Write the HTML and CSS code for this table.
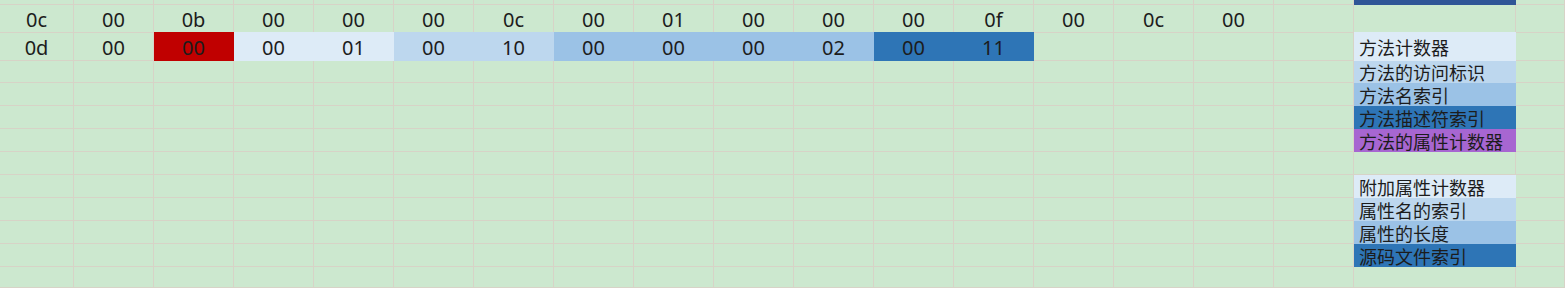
FILE: index.html
```html
<!DOCTYPE html>
<html lang="zh">
<head>
<meta charset="utf-8">
<title>Class file bytes</title>
<link rel="stylesheet" href="styles.css">
</head>
<body>
<div class="sheet">
  <div class="row h0">
    <div class="c"></div><div class="c"></div><div class="c"></div><div class="c"></div><div class="c"></div><div class="c"></div><div class="c"></div><div class="c"></div><div class="c"></div><div class="c"></div><div class="c"></div><div class="c"></div><div class="c"></div><div class="c"></div><div class="c"></div><div class="c"></div><div class="c"></div>
    <div class="c lab f bar"></div><div class="c"></div>
  </div>
  <div class="row h1">
    <div class="c">0c</div><div class="c">00</div><div class="c">0b</div><div class="c">00</div><div class="c">00</div><div class="c">00</div><div class="c">0c</div><div class="c">00</div><div class="c">01</div><div class="c">00</div><div class="c">00</div><div class="c">00</div><div class="c">0f</div><div class="c">00</div><div class="c">0c</div><div class="c">00</div><div class="c"></div>
    <div class="c lab"></div><div class="c"></div>
  </div>
  <div class="row h2">
    <div class="c">0d</div><div class="c">00</div><div class="c f red">00</div><div class="c f b1">00</div><div class="c f b1">01</div><div class="c f b2">00</div><div class="c f b2">10</div><div class="c f b3">00</div><div class="c f b3">00</div><div class="c f b3">00</div><div class="c f b3">02</div><div class="c f b4">00</div><div class="c f b4">11</div><div class="c"></div><div class="c"></div><div class="c"></div><div class="c"></div>
    <div class="c lab f b1">方法计数器</div><div class="c"></div>
  </div>
  <div class="row h3">
    <div class="c"></div><div class="c"></div><div class="c"></div><div class="c"></div><div class="c"></div><div class="c"></div><div class="c"></div><div class="c"></div><div class="c"></div><div class="c"></div><div class="c"></div><div class="c"></div><div class="c"></div><div class="c"></div><div class="c"></div><div class="c"></div><div class="c"></div>
    <div class="c lab f b2">方法的访问标识</div><div class="c"></div>
  </div>
  <div class="row h4">
    <div class="c"></div><div class="c"></div><div class="c"></div><div class="c"></div><div class="c"></div><div class="c"></div><div class="c"></div><div class="c"></div><div class="c"></div><div class="c"></div><div class="c"></div><div class="c"></div><div class="c"></div><div class="c"></div><div class="c"></div><div class="c"></div><div class="c"></div>
    <div class="c lab f b3">方法名索引</div><div class="c"></div>
  </div>
  <div class="row h4">
    <div class="c"></div><div class="c"></div><div class="c"></div><div class="c"></div><div class="c"></div><div class="c"></div><div class="c"></div><div class="c"></div><div class="c"></div><div class="c"></div><div class="c"></div><div class="c"></div><div class="c"></div><div class="c"></div><div class="c"></div><div class="c"></div><div class="c"></div>
    <div class="c lab f b4">方法描述符索引</div><div class="c"></div>
  </div>
  <div class="row h4">
    <div class="c"></div><div class="c"></div><div class="c"></div><div class="c"></div><div class="c"></div><div class="c"></div><div class="c"></div><div class="c"></div><div class="c"></div><div class="c"></div><div class="c"></div><div class="c"></div><div class="c"></div><div class="c"></div><div class="c"></div><div class="c"></div><div class="c"></div>
    <div class="c lab f pu">方法的属性计数器</div><div class="c"></div>
  </div>
  <div class="row h4">
    <div class="c"></div><div class="c"></div><div class="c"></div><div class="c"></div><div class="c"></div><div class="c"></div><div class="c"></div><div class="c"></div><div class="c"></div><div class="c"></div><div class="c"></div><div class="c"></div><div class="c"></div><div class="c"></div><div class="c"></div><div class="c"></div><div class="c"></div>
    <div class="c lab"></div><div class="c"></div>
  </div>
  <div class="row h4">
    <div class="c"></div><div class="c"></div><div class="c"></div><div class="c"></div><div class="c"></div><div class="c"></div><div class="c"></div><div class="c"></div><div class="c"></div><div class="c"></div><div class="c"></div><div class="c"></div><div class="c"></div><div class="c"></div><div class="c"></div><div class="c"></div><div class="c"></div>
    <div class="c lab f b1">附加属性计数器</div><div class="c"></div>
  </div>
  <div class="row h4">
    <div class="c"></div><div class="c"></div><div class="c"></div><div class="c"></div><div class="c"></div><div class="c"></div><div class="c"></div><div class="c"></div><div class="c"></div><div class="c"></div><div class="c"></div><div class="c"></div><div class="c"></div><div class="c"></div><div class="c"></div><div class="c"></div><div class="c"></div>
    <div class="c lab f b2">属性名的索引</div><div class="c"></div>
  </div>
  <div class="row h4">
    <div class="c"></div><div class="c"></div><div class="c"></div><div class="c"></div><div class="c"></div><div class="c"></div><div class="c"></div><div class="c"></div><div class="c"></div><div class="c"></div><div class="c"></div><div class="c"></div><div class="c"></div><div class="c"></div><div class="c"></div><div class="c"></div><div class="c"></div>
    <div class="c lab f b3">属性的长度</div><div class="c"></div>
  </div>
  <div class="row h4">
    <div class="c"></div><div class="c"></div><div class="c"></div><div class="c"></div><div class="c"></div><div class="c"></div><div class="c"></div><div class="c"></div><div class="c"></div><div class="c"></div><div class="c"></div><div class="c"></div><div class="c"></div><div class="c"></div><div class="c"></div><div class="c"></div><div class="c"></div>
    <div class="c lab f b4">源码文件索引</div><div class="c"></div>
  </div>
  <div class="row h5">
    <div class="c"></div><div class="c"></div><div class="c"></div><div class="c"></div><div class="c"></div><div class="c"></div><div class="c"></div><div class="c"></div><div class="c"></div><div class="c"></div><div class="c"></div><div class="c"></div><div class="c"></div><div class="c"></div><div class="c"></div><div class="c"></div><div class="c"></div>
    <div class="c lab"></div><div class="c"></div>
  </div>
</div>
</body>
</html>
```

FILE: styles.css
```css
html, body {
  margin: 0;
  padding: 0;
  background: #cce8cf;
  overflow: hidden;
}

body {
  font-family: "Noto Sans", "Noto Sans CJK SC", sans-serif;
  color: #1c1c1c;
}

.sheet {
  display: flex;
  flex-direction: column;
  width: 1565px;
}

.row {
  display: grid;
  grid-template-columns: 74px repeat(16, 80px) 162px 1fr;
}

.h0 { height: 5px; }
.h1 { height: 27px; }
.h2 { height: 29px; }
.h3 { height: 22px; }
.h4 { height: 23px; }
.h5 { height: 21px; }

.c {
  box-sizing: border-box;
  border-right: 1px solid #d7d3c7;
  border-bottom: 1px solid #d7d3c7;
  display: flex;
  align-items: center;
  justify-content: center;
  padding-top: 3px;
  font-size: 20px;
  line-height: 24px;
  white-space: nowrap;
  overflow: visible;
  min-width: 0;
}

.lab {
  justify-content: flex-start;
  padding: 1px 0 0 5px;
  font-family: "Noto Sans CJK SC", "Noto Sans", sans-serif;
  font-size: 18px;
  line-height: 16px;
}

.f { border-color: transparent; }

.red { background: #c00000; }
.b1 { background: #ddebf7; }
.b2 { background: #bdd7ee; }
.b3 { background: #9bc2e6; }
.b4 { background: #2e75b6; }
.pu { background: #a766d1; }
.bar { background: #2f5597; }
```
